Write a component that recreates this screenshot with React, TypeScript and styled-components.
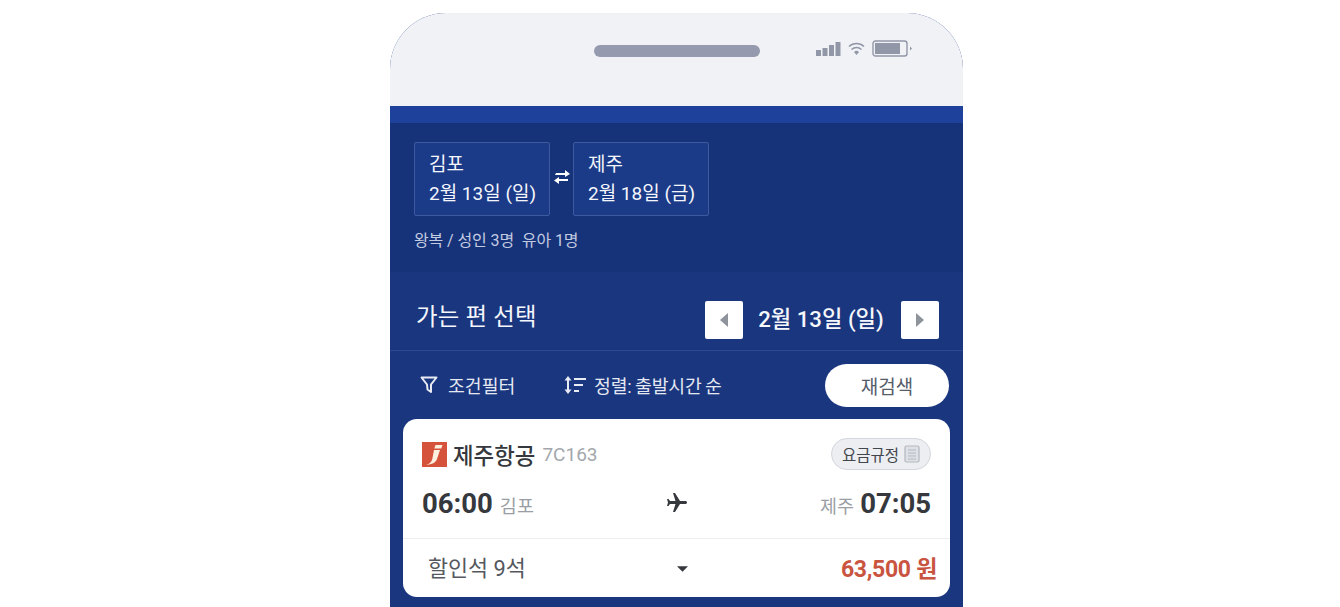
import React from 'react'
import styled, { createGlobalStyle } from 'styled-components'

const GlobalStyle = createGlobalStyle`
  html, body {
    margin: 0;
    padding: 0;
    background: #fff;
    overflow: hidden;
  }
  * {
    box-sizing: border-box;
  }
  body {
    font-family: Roboto, "Noto Sans CJK KR", "Noto Sans", sans-serif;
  }
`

const Page = styled.div`
  display: flex;
  justify-content: center;
  padding: 13px 0 0 13px;
  height: 607px;
`

const Phone = styled.div`
  width: 573px;
  height: 594px;
  border-radius: 56px 56px 0 0;
  overflow: hidden;
  background: #19367f;
  display: flex;
  flex-direction: column;
`

const StatusBar = styled.div`
  position: relative;
  height: 93px;
  flex: none;
  background: #f0f2f6;
  display: flex;
  justify-content: center;
  padding-top: 32px;
`

const Speaker = styled.div`
  width: 166px;
  height: 12px;
  border-radius: 6px;
  background: #959aae;
`

const StatusIcons = styled.div`
  position: absolute;
  left: 426px;
  top: 27px;
  display: flex;
  align-items: center;
  gap: 7px;
`

const Band = styled.div`
  height: 17px;
  flex: none;
  background: #1e429b;
`

const SearchSummary = styled.section`
  height: 149px;
  flex: none;
  background: #16337a;
  padding: 19px 24px 0;
`

const RouteRow = styled.div`
  display: flex;
  align-items: center;
`

const RouteBox = styled.div`
  width: 136px;
  height: 74px;
  padding: 7px 14px 0;
  border: 1px solid #3e5a9e;
  border-radius: 2px;
  background: #1b3b88;
  color: #f4f6fb;
  font-size: 19px;
  line-height: 29px;
  white-space: nowrap;
`

const SwapSlot = styled.div`
  width: 23px;
  display: flex;
  justify-content: center;
  margin-top: -5px;
`

const PassengerText = styled.div`
  margin-top: 14px;
  font-size: 16px;
  line-height: 22px;
  letter-spacing: -0.1px;
  color: #c3cbe0;
`

const ResultHeader = styled.div`
  height: 79px;
  flex: none;
  display: flex;
  align-items: center;
  justify-content: space-between;
  padding: 18px 24px 0 26px;
  border-bottom: 1px solid #2c4a92;
`

const ResultTitle = styled.h2`
  margin: 0 0 10px;
  font-size: 23.4px;
  font-weight: 400;
  color: #f5f7fb;
  letter-spacing: 0.2px;
`

const DateNav = styled.div`
  display: flex;
  align-items: center;
`

const NavButton = styled.button`
  width: 38px;
  height: 38px;
  padding: 0;
  border: 0;
  border-radius: 2px;
  background: #fff;
  display: flex;
  align-items: center;
  justify-content: center;
`

const NavDate = styled.strong`
  width: 158px;
  padding: 0 2px 7px 0;
  text-align: center;
  font-size: 22.2px;
  font-weight: 500;
  color: #f5f7fb;
`

const FilterRow = styled.div`
  height: 68px;
  flex: none;
  display: flex;
  align-items: center;
  padding: 0 14px 0 30px;
  color: #e4e8f2;
  font-size: 18.3px;
`

const FilterItem = styled.div<{ $width: number }>`
  width: ${(p) => p.$width}px;
  display: flex;
  align-items: center;
  white-space: nowrap;
`

const SortLabel = styled.span`
  letter-spacing: -0.15px;
  word-spacing: -1px;
`

const IconSlot = styled.span<{ $width: number }>`
  width: ${(p) => p.$width}px;
  flex: none;
  display: flex;
  align-items: center;
`

const SearchAgain = styled.button`
  margin-left: auto;
  width: 124px;
  height: 43px;
  border: 0;
  border-radius: 22px;
  background: #fff;
  color: #555c6a;
  font-family: inherit;
  font-size: 19px;
`

const FlightCard = styled.article`
  margin-left: 13px;
  width: 547px;
  height: 178px;
  flex: none;
  border-radius: 14px;
  background: #fff;
  display: flex;
  flex-direction: column;
`

const CardTop = styled.div`
  height: 120px;
  flex: none;
  padding: 19px 19px 0;
  border-bottom: 1px solid #eceef1;
`

const AirlineRow = styled.div`
  height: 32px;
  display: flex;
  align-items: center;
`

const AirlineName = styled.span`
  margin-left: 6px;
  font-size: 22.4px;
  font-weight: 500;
  color: #35383d;
`

const FlightNumber = styled.span`
  margin-left: 7px;
  font-size: 19px;
  color: #a3a7ac;
`

const FareRule = styled.span`
  margin-left: auto;
  width: 100px;
  height: 32px;
  border: 1px solid #d3d6dc;
  border-radius: 16px;
  background: #eceef2;
  color: #42464d;
  font-size: 15.5px;
  display: flex;
  align-items: center;
  justify-content: center;
  gap: 5px;
  white-space: nowrap;
`

const TimesRow = styled.div`
  margin-top: 15px;
  height: 36px;
  display: flex;
  align-items: center;
  justify-content: space-between;
`

const TimeGroup = styled.div`
  width: 200px;
  display: flex;
  align-items: baseline;
  gap: 7px;
`

const ArrivalGroup = styled(TimeGroup)`
  justify-content: flex-end;
  gap: 6px;
`

const Time = styled.strong`
  font-size: 27.5px;
  font-weight: 700;
  color: #35383d;
`

const Airport = styled.span`
  font-size: 18.5px;
  color: #9a9ea4;
`

const CardBottom = styled.div`
  flex: 1;
  padding: 0 13px 3px 25px;
  display: grid;
  grid-template-columns: 1fr 1fr 1fr;
  align-items: center;
`

const SeatText = styled.span`
  font-size: 21.8px;
  color: #55585e;
  white-space: nowrap;
`

const Caret = styled.svg`
  justify-self: center;
  margin: 5px 0 0 1px;
`

const Price = styled.strong`
  justify-self: end;
  font-size: 23px;
  font-weight: 700;
  letter-spacing: -0.3px;
  color: #c9543f;
  white-space: nowrap;
`

function App() {
  return (
    <Page>
      <GlobalStyle />
      <Phone>
        <StatusBar>
          <Speaker />
          <StatusIcons>
            <svg width="25" height="16" viewBox="0 0 25 16" fill="#9297a8">
              <rect x="0" y="9" width="5" height="6" />
              <rect x="6.5" y="7" width="5" height="8" />
              <rect x="13" y="4" width="5" height="11" />
              <rect x="19.5" y="1" width="5" height="14" />
            </svg>
            <svg width="17" height="14" viewBox="0 0 17 14" fill="none" stroke="#9297a8" strokeWidth="1.5">
              <path d="M1 4.5a11 11 0 0 1 15 0" />
              <path d="M3.5 7.5a7.4 7.4 0 0 1 10 0" />
              <path d="M6 10a3.6 3.6 0 0 1 5 0L8.5 13z" fill="#9297a8" stroke="none" />
            </svg>
            <svg width="41" height="17" viewBox="0 0 41 17" fill="none">
              <rect x="1" y="1" width="34" height="15" rx="2.5" stroke="#9297a8" strokeWidth="1.4" />
              <rect x="3" y="3" width="25" height="11" fill="#9297a8" />
              <path d="M38 6.5l2 2-2 2z" fill="#9297a8" />
            </svg>
          </StatusIcons>
        </StatusBar>
        <Band />

        <SearchSummary>
          <RouteRow>
            <RouteBox>
              김포
              <br />2월 13일 (일)
            </RouteBox>
            <SwapSlot>
              <svg width="18" height="14" viewBox="0 0 18 14" fill="#fff">
                <path d="M3 3h9V0l5 4-5 3V5H2z" />
                <path d="M15 9H6V7l-5 3.5L6 14v-3h9z" />
              </svg>
            </SwapSlot>
            <RouteBox>
              제주
              <br />2월 18일 (금)
            </RouteBox>
          </RouteRow>
          <PassengerText>왕복 / 성인 3명{'\u00a0\u00a0'}유아 1명</PassengerText>
        </SearchSummary>

        <ResultHeader>
          <ResultTitle>가는 편 선택</ResultTitle>
          <DateNav>
            <NavButton aria-label="이전 날짜">
              <svg width="8" height="14" viewBox="0 0 8 14" fill="#8f939b">
                <path d="M8 0v14L0 7z" />
              </svg>
            </NavButton>
            <NavDate>2월 13일 (일)</NavDate>
            <NavButton aria-label="다음 날짜">
              <svg width="8" height="14" viewBox="0 0 8 14" fill="#8f939b">
                <path d="M0 0v14l8-7z" />
              </svg>
            </NavButton>
          </DateNav>
        </ResultHeader>

        <FilterRow>
          <FilterItem $width={144}>
            <IconSlot $width={28}>
              <svg width="18" height="18" viewBox="0 0 18 18" fill="none" stroke="#e9ecf4" strokeWidth="2" strokeLinejoin="round">
                <path d="M1.5 1.5h15L11 8.5V16l-3.5-2.5-.5-5z" />
              </svg>
            </IconSlot>
            조건필터
          </FilterItem>
          <FilterItem $width={190}>
            <IconSlot $width={30}>
              <svg width="22" height="18" viewBox="0 0 22 18" fill="#e9ecf4">
                <path d="M4 0l3.5 4.5H5v9h2.5L4 18 .5 13.5H3v-9H.5z" />
                <rect x="10" y="2" width="12" height="2" />
                <rect x="10" y="8" width="9" height="2" />
                <rect x="10" y="14" width="5" height="2" />
              </svg>
            </IconSlot>
            <SortLabel>정렬: 출발시간 순</SortLabel>
          </FilterItem>
          <SearchAgain>재검색</SearchAgain>
        </FilterRow>

        <FlightCard>
          <CardTop>
            <AirlineRow>
              <svg width="25" height="25" viewBox="0 0 25 25">
                <rect width="25" height="25" fill="#d5533a" />
                <path d="M13.5 3h7l-1.2 3.6h-7z" fill="#fdf0df" />
                <path d="M12 8h6l-3 9c-1 3.5-5 5.5-11 6 3-1 5.5-2.5 6.3-6z" fill="#fdf0df" />
              </svg>
              <AirlineName>제주항공</AirlineName>
              <FlightNumber>7C163</FlightNumber>
              <FareRule>
                요금규정
                <svg width="16" height="18" viewBox="0 0 16 18" fill="none" stroke="#b3b7be" strokeWidth="1.2">
                  <rect x="1" y="1" width="14" height="16" rx="1.5" fill="#dfe1e6" />
                  <path d="M4 5h8M4 8h8M4 11h8M4 14h8" />
                </svg>
              </FareRule>
            </AirlineRow>
            <TimesRow>
              <TimeGroup>
                <Time>06:00</Time>
                <Airport>김포</Airport>
              </TimeGroup>
              <svg width="24" height="24" viewBox="0 0 24 24" fill="#35383d">
                <path
                  transform="rotate(90 12 12)"
                  d="M21 16v-2l-8-5V3.5c0-.83-.67-1.5-1.5-1.5S10 2.67 10 3.5V9l-8 5v2l8-2.5V19l-2 1.5V22l3.5-1 3.5 1v-1.5L13 19v-5.5l8 2.5z"
                />
              </svg>
              <ArrivalGroup>
                <Airport>제주</Airport>
                <Time>07:05</Time>
              </ArrivalGroup>
            </TimesRow>
          </CardTop>
          <CardBottom>
            <SeatText>할인석 9석</SeatText>
            <Caret width="11" height="6" viewBox="0 0 12 6" fill="#35383d">
              <path d="M0 0h12L6 6z" />
            </Caret>
            <Price>63,500 원</Price>
          </CardBottom>
        </FlightCard>
      </Phone>
    </Page>
  )
}

export default App
